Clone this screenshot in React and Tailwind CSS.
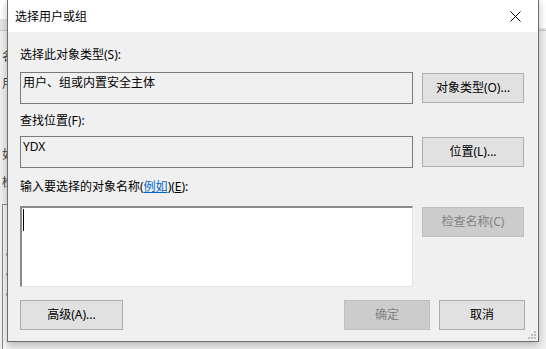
const font = { fontFamily: '"Noto Sans", "Noto Sans CJK SC", sans-serif' };

function WinButton({ children, disabled, className = "" }) {
  return (
    <button
      disabled={disabled}
      className={`flex h-[30px] items-center justify-center border text-[12px] leading-[16px] ${
        disabled
          ? "border-[#bfbfbf] bg-[#cccccc] text-[#838383]"
          : "border-[#adadad] bg-[#e1e1e1] text-black"
      } ${className}`}
    >
      {children}
    </button>
  );
}

function Field({ children }) {
  return (
    <div className="h-[32px] w-[393px] border border-[#7a7a7a] bg-[#f0f0f0] px-[2px] pt-[2px] text-[12px] leading-[16px] text-black">
      {children}
    </div>
  );
}

export default function App() {
  return (
    <div
      className="relative h-[349px] w-[546px] overflow-hidden bg-[#f0f0f0]"
      style={font}
    >
      {/* window behind the dialog */}
      <div className="absolute left-0 right-0 top-0 h-[19px] bg-white" />
      <div className="absolute left-0 right-0 top-[19px] h-[11px] bg-[#e6e6e6]" />
      <div className="absolute left-[538px] right-0 top-0 h-[28px] bg-white" />
      <div className="absolute left-0 right-0 top-[30px] h-px bg-[#c4c4c4]" />
      <div className="absolute left-[2px] top-[49px] flex w-[5px] flex-col overflow-hidden text-[12px] leading-[16px] text-[#444]">
        <span>名</span>
        <span className="mt-[11px]">用</span>
        <span className="mt-[55px]">如</span>
        <span className="mt-[12px]">检</span>
      </div>
      <div className="absolute left-[2px] top-[204px] h-[150px] w-[5px] border-l border-t border-[#8a8a8a] bg-[#f7f7f7]">
        <div className="ml-[3px] mt-[48px] h-[3px] w-[2px] bg-[#a9b78a]" />
        <div className="ml-[3px] mt-[17px] h-[3px] w-[2px] bg-[#a9b78a]" />
        <div className="ml-[3px] mt-[17px] h-[3px] w-[2px] bg-[#a9b78a]" />
      </div>

      {/* dialog */}
      <div className="absolute left-[7px] top-[-1px] flex h-[343px] w-[532px] flex-col border border-[#6e6e6e] bg-[#f0f0f0] shadow-[0_3px_8px_rgba(0,0,0,0.25)]">
        <div className="flex h-[32px] shrink-0 items-center justify-between bg-white pl-[7px]">
          <span className="pt-px text-[12px] leading-[16px] text-black">
            选择用户或组
          </span>
          <div className="flex h-full w-[46px] items-center justify-center pt-px">
            <svg width="11" height="11" viewBox="0 0 11 11" fill="none">
              <path d="M0.5 0.5 L10.5 10.5 M10.5 0.5 L0.5 10.5" stroke="#000" strokeWidth="1" />
            </svg>
          </div>
        </div>

        <div className="flex flex-1 flex-col pl-[12px] pr-[13px] pt-[15px]">
          <div className="text-[12px] leading-[16px] text-black">
            选择此对象类型(S):
          </div>
          <div className="mt-[9px] flex gap-[9px]">
            <Field>用户、组或内置安全主体</Field>
            <WinButton className="mt-px w-[102px]">对象类型(O)...</WinButton>
          </div>

          <div className="mt-[9px] text-[12px] leading-[16px] text-black">
            查找位置(F):
          </div>
          <div className="mt-[7px] flex gap-[9px]">
            <Field>YDX</Field>
            <WinButton className="mt-[1px] w-[102px]">位置(L)...</WinButton>
          </div>

          <div className="mt-[11px] text-[12px] leading-[16px] text-black">
            输入要选择的对象名称(
            <span className="text-[#0066cc] underline">例如</span>)(
            <span className="underline">E</span>):
          </div>
          <div className="mt-[11px] flex gap-[9px]">
            <div className="h-[81px] w-[393px] border-b border-l-2 border-r border-t-2 border-b-[#e3e3e3] border-l-[#8a8a8a] border-r-[#e3e3e3] border-t-[#8a8a8a] bg-white pl-px pt-px">
              <div className="h-[22px] w-px bg-black" />
            </div>
            <WinButton disabled className="mt-[1px] w-[102px]">
              检查名称(C)
            </WinButton>
          </div>

          <div className="mt-[13px] flex items-start">
            <WinButton className="w-[103px]">高级(A)...</WinButton>
            <div className="flex-1" />
            <WinButton disabled className="w-[86px]">
              确定
            </WinButton>
            <WinButton className="ml-[9px] w-[86px]">取消</WinButton>
          </div>
        </div>

        {/* size grip */}
        <div className="absolute bottom-[2px] right-[2px] grid grid-cols-3 gap-px">
          <span className="h-[2px] w-[2px]" />
          <span className="h-[2px] w-[2px]" />
          <span className="h-[2px] w-[2px] bg-[#bdbdbd]" />
          <span className="h-[2px] w-[2px]" />
          <span className="h-[2px] w-[2px] bg-[#bdbdbd]" />
          <span className="h-[2px] w-[2px] bg-[#bdbdbd]" />
          <span className="h-[2px] w-[2px] bg-[#bdbdbd]" />
          <span className="h-[2px] w-[2px] bg-[#bdbdbd]" />
          <span className="h-[2px] w-[2px] bg-[#bdbdbd]" />
        </div>
      </div>
    </div>
  );
}
